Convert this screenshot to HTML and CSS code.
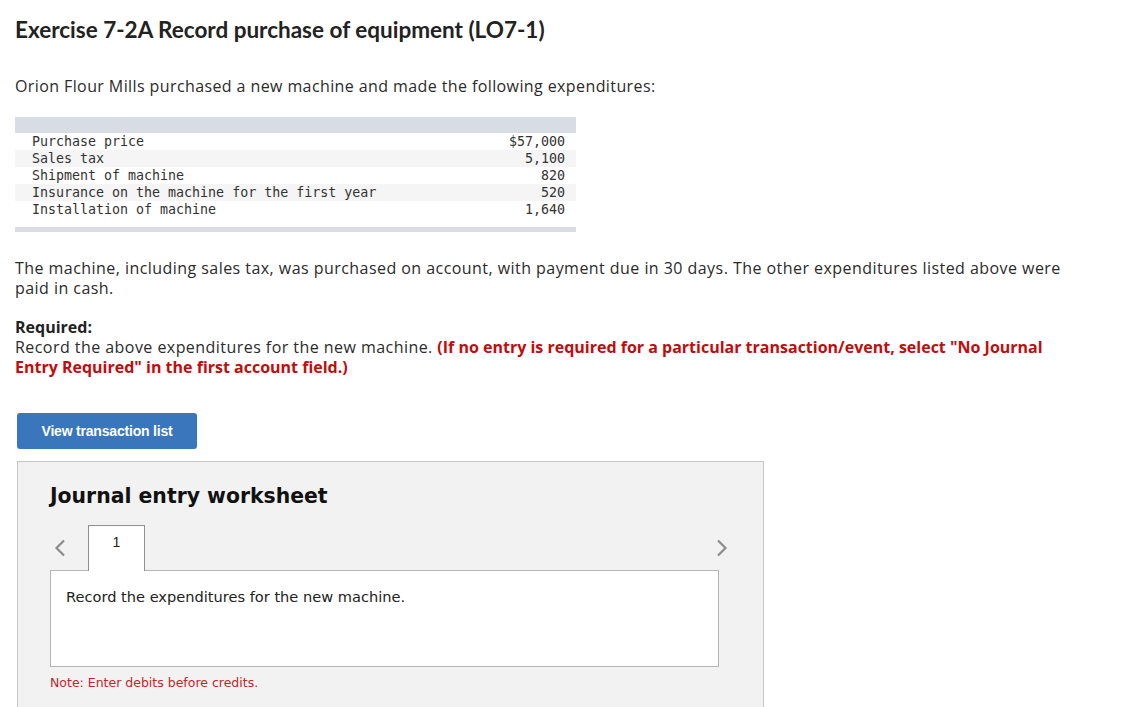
FILE: index.html
```html
<!DOCTYPE html>
<html lang="en">
<head>
<meta charset="utf-8">
<title>Exercise 7-2A</title>
<link rel="stylesheet" href="styles.css">
</head>
<body>
<main class="page">
  <h1 class="title">Exercise 7-2A Record purchase of equipment (LO7-1)</h1>
  <p class="intro">Orion Flour Mills purchased a new machine and made the following expenditures:</p>

  <table class="data">
    <thead><tr><th colspan="2"></th></tr></thead>
    <tbody>
      <tr><td class="lbl">Purchase price</td><td class="val">$57,000</td></tr>
      <tr><td class="lbl">Sales tax</td><td class="val">5,100</td></tr>
      <tr><td class="lbl">Shipment of machine</td><td class="val">820</td></tr>
      <tr><td class="lbl">Insurance on the machine for the first year</td><td class="val">520</td></tr>
      <tr><td class="lbl">Installation of machine</td><td class="val">1,640</td></tr>
    </tbody>
    <tfoot><tr><td colspan="2"></td></tr></tfoot>
  </table>

  <p class="text">The machine, including sales tax, was purchased on account, with payment due in 30 days. The other expenditures listed above were paid in cash.</p>

  <div class="required">
    <strong class="req-label">Required:</strong>
    <p class="text req-text">Record the above expenditures for the new machine. <strong class="warn">(If no entry is required for a particular transaction/event, select "No Journal Entry Required" in the first account field.)</strong></p>
  </div>

  <button class="btn" type="button">View transaction list</button>

  <section class="worksheet">
    <h2 class="ws-title">Journal entry worksheet</h2>
    <div class="tabs">
      <span class="chev chev-left"><svg width="12" height="18" viewBox="0 0 12 18"><path d="M10 1.5 L2.5 9 L10 16.5" fill="none" stroke="#8c8c8c" stroke-width="2.2"/></svg></span>
      <span class="tab">1</span>
      <span class="chev chev-right"><svg width="12" height="18" viewBox="0 0 12 18"><path d="M2 1.5 L9.5 9 L2 16.5" fill="none" stroke="#8c8c8c" stroke-width="2.2"/></svg></span>
    </div>
    <div class="ws-box">
      <p class="ws-text">Record the expenditures for the new machine.</p>
    </div>
    <p class="note">Note: Enter debits before credits.</p>
  </section>
</main>
</body>
</html>
```
FILE: styles.css
```css
html, body {
  margin: 0;
  padding: 0;
  background: #fff;
}
body {
  font-family: "Open Sans", Lato, Arial, sans-serif;
  color: #2b2b2b;
  overflow: hidden;
}
.page {
  width: 1070px;
  padding: 16px 0 0 15px;
}
.title {
  margin: 0;
  font-family: Lato, "Open Sans", Arial, sans-serif;
  font-size: 22.5px;
  line-height: 28px;
  font-weight: 700;
  color: #222;
}
.intro {
  margin: 32px 0 0;
  font-size: 16px;
  line-height: 20px;
  letter-spacing: 0.4px;
}
.data {
  margin-top: 21px;
  width: 561px;
  border-collapse: collapse;
  font-family: "DejaVu Sans Mono", "Liberation Mono", monospace;
  font-size: 13.3px;
  color: #333;
}
.data thead th {
  height: 16px;
  padding: 0;
  background: #d7dce5;
}
.data tbody td {
  height: 17px;
  padding: 0;
  line-height: 17px;
}
.data tbody tr:nth-child(even) td {
  background: #f5f5f5;
}
.data .lbl {
  padding-left: 17px;
}
.data .val {
  text-align: right;
  padding-right: 11px;
}
.data tfoot td {
  padding: 0;
  height: 5px;
  background: #d7dce5;
  border-top: 9px solid #fff;
}
.text {
  margin: 0;
  font-size: 16px;
  line-height: 20px;
  letter-spacing: 0.45px;
}
.data + .text {
  margin-top: 26px;
}
.required {
  margin-top: 19px;
}
.req-label {
  display: block;
  font-size: 16px;
  line-height: 20px;
  color: #222;
}
.warn {
  color: #c00d0d;
  letter-spacing: 0;
}
.btn {
  display: block;
  margin: 36px 0 0 2px;
  width: 180px;
  height: 36px;
  border: 0;
  border-radius: 3px;
  background: #3a76bb;
  color: #fff;
  font-family: Arial, "Liberation Sans", sans-serif;
  font-weight: 700;
  font-size: 14px;
  letter-spacing: -0.2px;
  padding: 0;
}
.worksheet {
  margin: 12px 0 0 2px;
  width: 747px;
  height: 246px;
  background: #f2f2f2;
  border: 1px solid #c6c6c6;
  border-bottom: 0;
  padding: 0 0 0 32px;
  box-sizing: border-box;
  font-family: "DejaVu Sans", Verdana, sans-serif;
}
.ws-title {
  margin: 22px 0 0;
  font-size: 20.4px;
  line-height: 24px;
  font-weight: 700;
  color: #111;
}
.tabs {
  display: flex;
  align-items: center;
  width: 670px;
  margin-top: 17px;
  height: 46px;
}
.chev {
  display: flex;
}
.chev-left {
  margin-left: 4px;
}
.tab {
  margin-left: 22px;
  width: 57px;
  height: 46px;
  box-sizing: border-box;
  background: #fff;
  border: 1px solid #8f8f8f;
  border-bottom: 0;
  display: flex;
  justify-content: center;
  padding-top: 8px;
  font-family: Arial, "Liberation Sans", sans-serif;
  font-size: 14px;
  line-height: 16px;
  color: #222;
  position: relative;
  z-index: 1;
}
.chev-right {
  margin-left: auto;
  margin-right: -8px;
}
.ws-box {
  width: 669px;
  height: 97px;
  box-sizing: border-box;
  margin-top: -1px;
  background: #fff;
  border: 1px solid #b5b5b5;
  padding: 17px 0 0 15px;
}
.ws-text {
  margin: 0;
  font-size: 14.6px;
  line-height: 18px;
  color: #222;
}
.note {
  margin: 8px 0 0;
  font-size: 12.5px;
  line-height: 16px;
  color: #c0272d;
}
```
